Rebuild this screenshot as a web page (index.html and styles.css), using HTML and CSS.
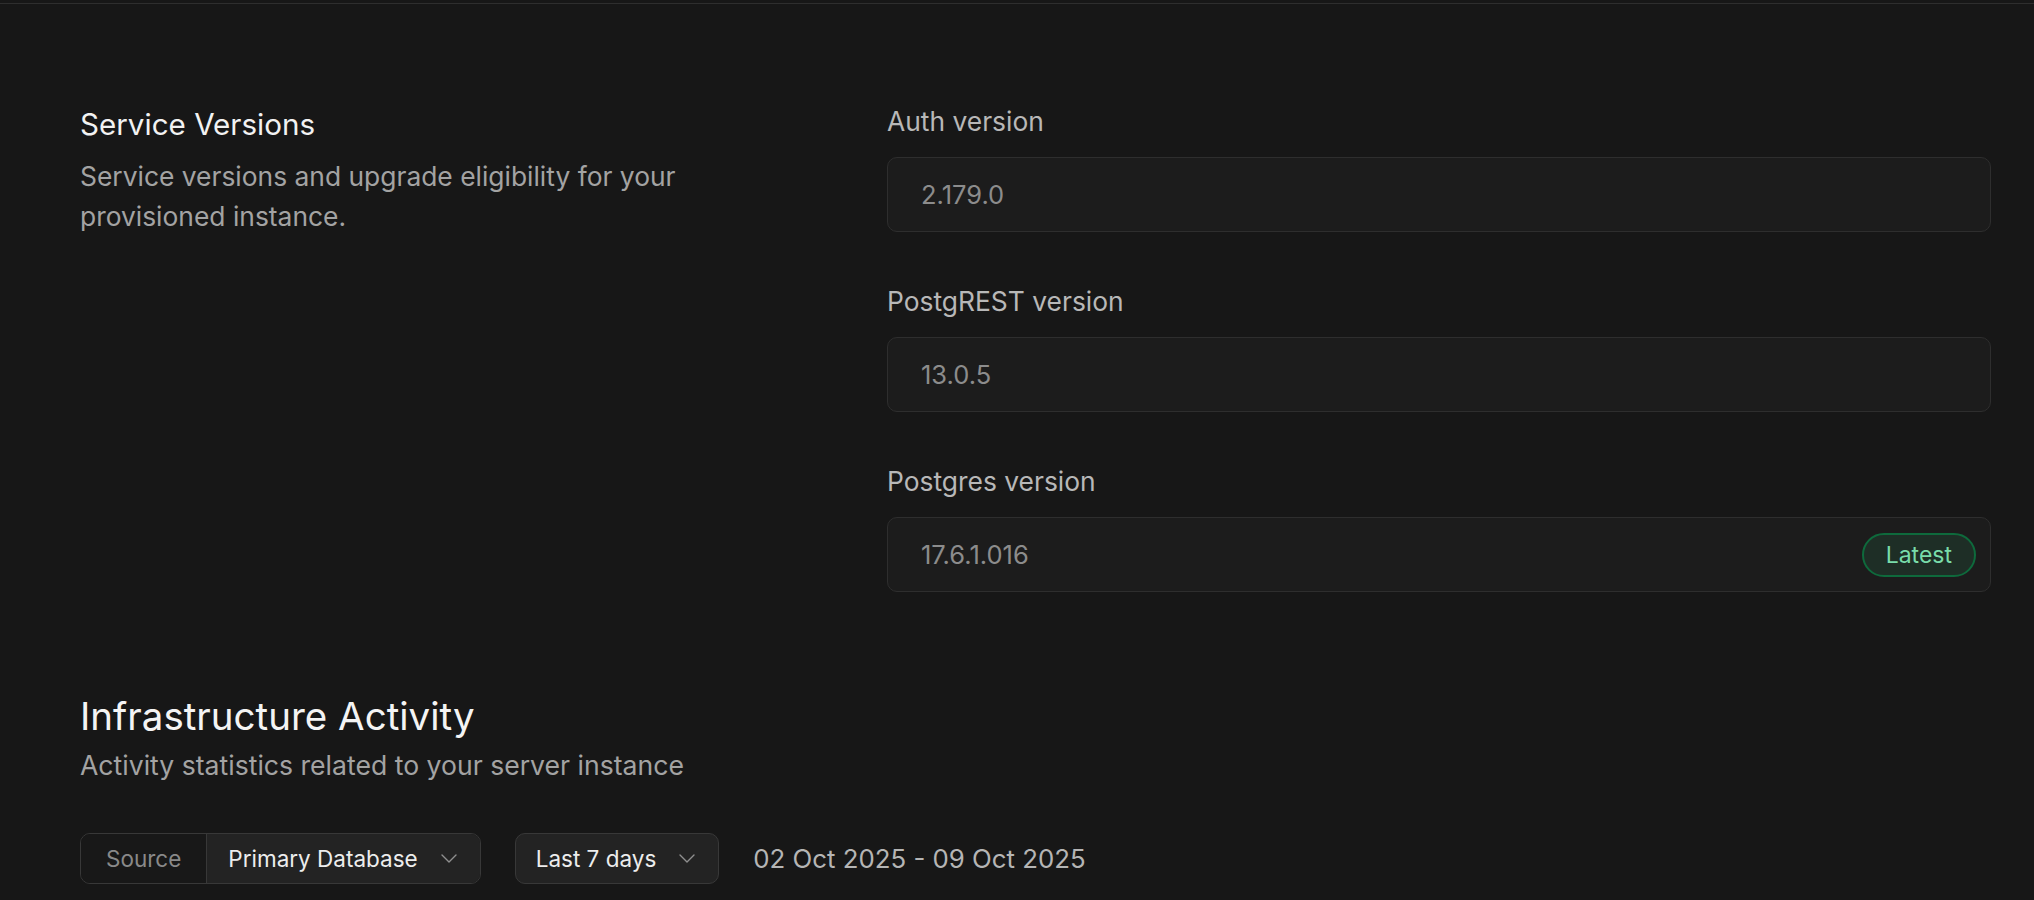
FILE: index.html
```html
<!DOCTYPE html>
<html lang="en">
<head>
<meta charset="utf-8">
<title>Service Versions</title>
<link rel="stylesheet" href="styles.css">
</head>
<body>
<div class="page">
  <section class="versions">
    <div class="versions-intro">
      <h2 class="section-title">Service Versions</h2>
      <p class="section-desc">Service versions and upgrade eligibility for your provisioned instance.</p>
    </div>
    <div class="fields">
      <div class="field">
        <label class="field-label">Auth version</label>
        <div class="field-input"><span class="field-value">2.179.0</span></div>
      </div>
      <div class="field">
        <label class="field-label">PostgREST version</label>
        <div class="field-input"><span class="field-value">13.0.5</span></div>
      </div>
      <div class="field">
        <label class="field-label">Postgres version</label>
        <div class="field-input"><span class="field-value">17.6.1.016</span><span class="badge">Latest</span></div>
      </div>
    </div>
  </section>

  <section class="activity">
    <h1 class="activity-title">Infrastructure Activity</h1>
    <p class="activity-desc">Activity statistics related to your server instance</p>
    <div class="toolbar">
      <div class="source-group">
        <span class="source-label">Source</span>
        <button class="select select-in-group">Primary Database
          <svg class="chev" viewBox="0 0 16 9" width="16" height="9"><path d="M1 1l7 7 7-7" fill="none" stroke="currentColor" stroke-width="1.4" stroke-linecap="round" stroke-linejoin="round"/></svg>
        </button>
      </div>
      <button class="select select-solo">Last 7 days
        <svg class="chev" viewBox="0 0 16 9" width="16" height="9"><path d="M1 1l7 7 7-7" fill="none" stroke="currentColor" stroke-width="1.4" stroke-linecap="round" stroke-linejoin="round"/></svg>
      </button>
      <span class="date-range">02 Oct 2025 - 09 Oct 2025</span>
    </div>
  </section>
</div>
</body>
</html>
```

FILE: styles.css
```css
* { box-sizing: border-box; }

html, body {
  margin: 0;
  padding: 0;
  background: #171717;
  height: 100%;
  overflow: hidden;
}

body {
  font-family: Inter, "Noto Sans", sans-serif;
  color: #ededed;
}

.page {
  padding-top: 3px;
}

.versions {
  border-top: 1px solid #2e2e2e;
  padding: 97px 43px 0 80px;
  display: grid;
  grid-template-columns: 1fr 1104px;
}

.section-title {
  margin: 3px 0 0;
  font-size: 29.6px;
  line-height: 40px;
  font-weight: 400;
  color: #f2f2f2;
}

.section-desc {
  margin: 12px 0 0;
  max-width: 640px;
  font-size: 26.4px;
  line-height: 40px;
  color: #a3a3a3;
}

.fields {
  display: flex;
  flex-direction: column;
  gap: 49px;
}

.field {
  display: flex;
  flex-direction: column;
  gap: 16px;
}

.field-label {
  font-size: 26.4px;
  line-height: 40px;
  color: #b8b8b8;
}

.field-input {
  height: 75px;
  border: 1px solid #2e2e2e;
  border-radius: 10px;
  background: #1c1c1c;
  display: flex;
  align-items: center;
  justify-content: space-between;
  padding: 0 14px 0 33px;
}

.field-value {
  font-size: 25.5px;
  color: #8c8c8c;
}

.badge {
  height: 44px;
  padding: 0 22px;
  border: 2px solid #0e6a3c;
  border-radius: 22px;
  background: #1e2e26;
  color: #79dcaa;
  font-size: 23px;
  display: flex;
  align-items: center;
}

.activity {
  padding: 100px 43px 0 80px;
}

.activity-title {
  margin: 0;
  font-size: 38.5px;
  line-height: 48px;
  font-weight: 400;
  color: #f4f4f4;
}

.activity-desc {
  margin: 5px 0 0;
  font-size: 26.6px;
  line-height: 40px;
  color: #a3a3a3;
}

.toolbar {
  margin-top: 48px;
  display: flex;
  align-items: center;
  gap: 34px;
}

.source-group {
  display: flex;
  height: 51px;
  border: 1px solid #383838;
  border-radius: 10px;
  overflow: hidden;
}

.source-label {
  display: flex;
  align-items: center;
  padding: 0 25px;
  font-size: 22.5px;
  color: #898989;
  background: #181818;
  border-right: 1px solid #383838;
}

.select {
  font-family: inherit;
  display: flex;
  align-items: center;
  gap: 23px;
  font-size: 22.5px;
  color: #ededed;
  background: #232323;
  cursor: pointer;
}

.select-in-group {
  border: 0;
  padding: 0 23px 0 21px;
  height: 100%;
}

.select-solo {
  height: 51px;
  border: 1px solid #383838;
  border-radius: 10px;
  padding: 0 23px 0 20px;
}

.chev {
  color: #8f8f8f;
  display: block;
}

.date-range {
  font-size: 25.8px;
  color: #b5b5b5;
}
```
